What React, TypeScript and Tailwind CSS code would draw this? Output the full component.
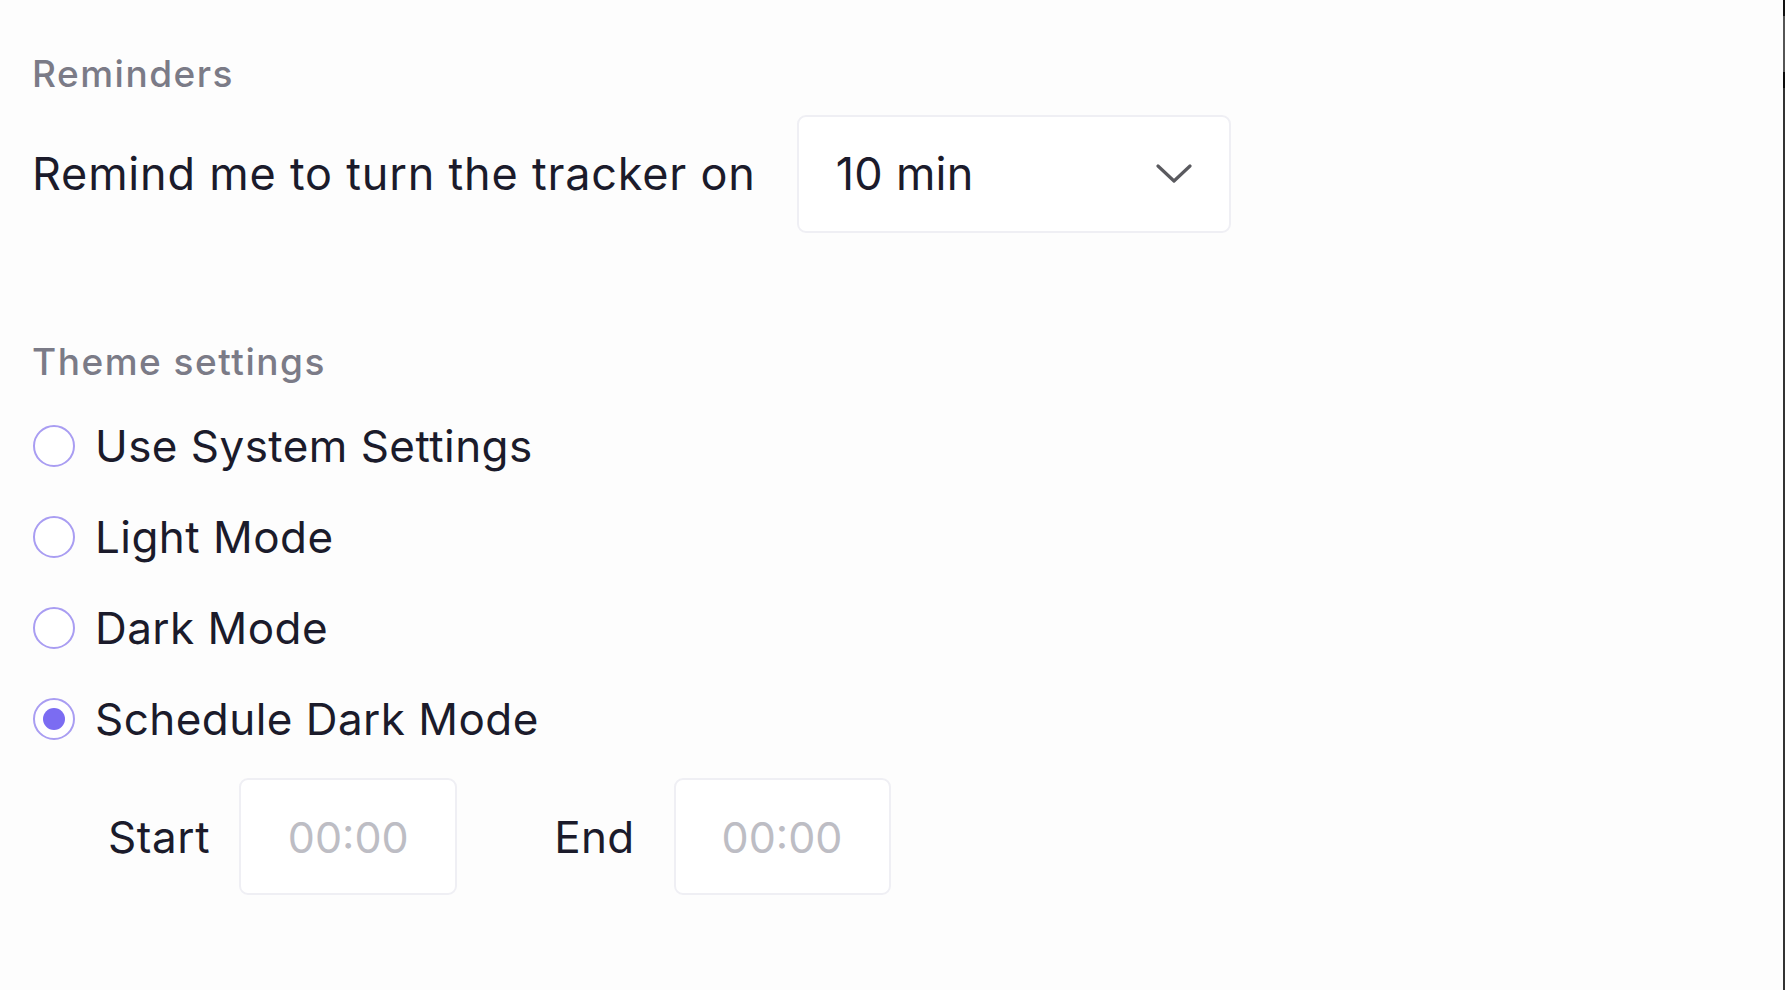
import React from "react";

const font = { fontFamily: "Inter, 'Noto Sans', sans-serif" };

function Radio({ checked, label }: { checked?: boolean; label: string }) {
  return (
    <div className="flex items-center h-[50px]">
      <div className="ml-[1px] w-[42px] h-[42px] rounded-full border-2 border-[#a99df2] flex items-center justify-center bg-white">
        {checked && <div className="w-[22px] h-[22px] rounded-full bg-[#7b6cf2]" />}
      </div>
      <span className="ml-[20px] text-[44px] leading-[50px] text-[#1b1b2b] tracking-[0.45px]">{label}</span>
    </div>
  );
}

export default function App() {
  return (
    <div className="flex h-screen w-full bg-[#fdfdfd]" style={font}>
      <div className="flex-1 pl-[32px] pt-[54px]">
        <div className="text-[37px] leading-[40px] text-[#7b7b87] font-medium tracking-[1.5px]">Reminders</div>
        <div className="mt-[21px] flex items-center">
          <span className="text-[45px] leading-[50px] text-[#1b1b2b] tracking-[0.8px]">Remind me to turn the tracker on</span>
          <div className="ml-[41px] w-[434px] h-[118px] rounded-[9px] border-2 border-[#efeff4] bg-white flex items-center justify-between pl-[37px] pr-[37px]">
            <span className="text-[45px] leading-[50px] text-[#1b1b2b] tracking-[0.3px]">10 min</span>
            <svg width="36" height="20" viewBox="0 0 36 20" fill="none">
              <path d="M2 2 L18 17 L34 2" stroke="#5a5a5f" strokeWidth="3.2" strokeLinecap="round" strokeLinejoin="round" />
            </svg>
          </div>
        </div>
        <div className="mt-[109px] text-[37px] leading-[40px] text-[#7b7b87] font-medium tracking-[1.5px]">Theme settings</div>
        <div className="mt-[39px] flex flex-col gap-[41px]">
          <Radio label="Use System Settings" />
          <Radio label="Light Mode" />
          <Radio label="Dark Mode" />
          <Radio label="Schedule Dark Mode" checked />
        </div>
        <div className="mt-[34px] flex items-center pl-[76px]">
          <span className="text-[44px] leading-[50px] text-[#1b1b2b] tracking-[0.6px]">Start</span>
          <div className="ml-[29px] w-[218px] h-[117px] rounded-[9px] border-2 border-[#efeff4] bg-white flex items-center justify-center">
            <span className="text-[43px] leading-[50px] text-[#bdbdc4]">00:00</span>
          </div>
          <span className="ml-[97px] text-[44px] leading-[50px] text-[#1b1b2b] tracking-[0.3px]">End</span>
          <div className="ml-[39px] w-[217px] h-[117px] rounded-[9px] border-2 border-[#efeff4] bg-white flex items-center justify-center">
            <span className="text-[43px] leading-[50px] text-[#bdbdc4]">00:00</span>
          </div>
        </div>
      </div>
      <div className="w-[2px] h-full bg-[#333333] flex flex-col">
        <div className="h-[16px] bg-[#111]" />
        <div className="h-[56px] bg-[#555]" />
        <div className="h-[16px] bg-[#0a0a0a]" />
      </div>
    </div>
  );
}
